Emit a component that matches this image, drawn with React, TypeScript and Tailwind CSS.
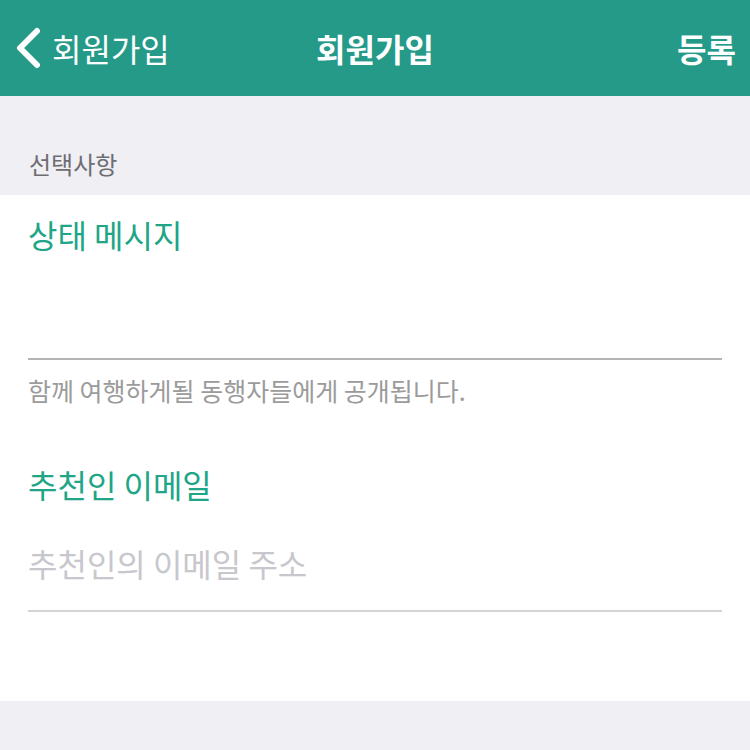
export default function App() {
  const font = { fontFamily: '"Noto Sans CJK KR", "Noto Sans", sans-serif' };
  return (
    <div className="w-[750px] h-[750px] bg-[#efeff4] flex flex-col overflow-hidden" style={font}>
      <header className="h-[96px] bg-[#259a89] flex items-center justify-between px-[14px] text-white relative">
        <div className="flex items-center gap-[10px]">
          <svg width="28" height="42" viewBox="0 0 28 42" fill="none">
            <path d="M23 4 L6 21 L23 38" stroke="white" strokeWidth="6" strokeLinecap="round" strokeLinejoin="round" />
          </svg>
          <span className="text-[32px] leading-none">회원가입</span>
        </div>
        <span className="absolute left-1/2 -translate-x-1/2 text-[32px] font-bold leading-none">회원가입</span>
        <span className="text-[32px] font-bold leading-none">등록</span>
      </header>
      <div className="h-[99px] flex items-end pb-[19px] px-[29px]">
        <span className="text-[24px] text-[#6d6d72] leading-none">선택사항</span>
      </div>
      <div className="bg-white h-[506px] flex flex-col px-[28px]">
        <div className="pt-[23px] text-[32px] text-[#20a586] leading-none">상태 메시지</div>
        <div className="mt-[108px] h-[2px] bg-[#b4b4b4]" />
        <div className="mt-[18px] text-[25px] text-[#9b9b9b] leading-none">함께 여행하게될 동행자들에게 공개됩니다.</div>
        <div className="mt-[65px] text-[32px] text-[#20a586] leading-none">추천인 이메일</div>
        <div className="mt-[47px] text-[32px] text-[#c7c7cd] leading-none">추천인의 이메일 주소</div>
        <div className="mt-[31px] h-[2px] bg-[#d4d4d4]" />
      </div>
    </div>
  );
}
